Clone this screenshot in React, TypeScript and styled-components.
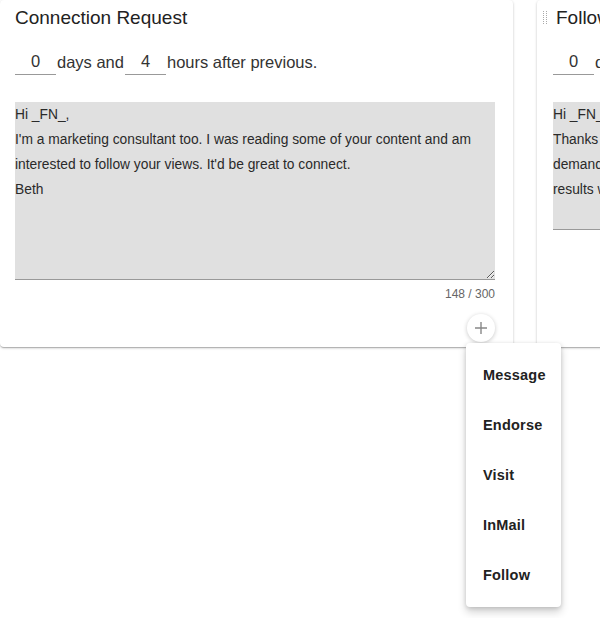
import React from 'react';
import styled, {createGlobalStyle} from 'styled-components';

const GlobalStyle = createGlobalStyle`
  body {
    margin: 0;
    padding: 0;
    background: #fff;
    font-family: 'Liberation Sans', Arial, sans-serif;
    color: #222;
  }
`;

const Page = styled.div`
  position: relative;
  width: 600px;
  height: 618px;
  overflow: hidden;
`;

const Board = styled.div`
  display: flex;
  align-items: flex-start;
  gap: 24px;
  width: max-content;
`;

const Card = styled.section<{$first?: boolean}>`
  position: relative;
  box-sizing: border-box;
  flex-shrink: 0;
  width: 513px;
  height: 347px;
  padding: 0 18px 0 ${({$first}) => ($first ? 15 : 16)}px;
  background: #fff;
  border-radius: 4px;
  box-shadow: 0 1px 3px rgba(0, 0, 0, 0.2), 0 1px 1px rgba(0, 0, 0, 0.12),
    0 2px 1px -1px rgba(0, 0, 0, 0.1);
  z-index: ${({$first}) => ($first ? 2 : 1)};
`;

const Header = styled.header`
  display: flex;
  align-items: center;
  gap: 9px;
  height: 36px;
`;

const Handle = styled.svg`
  margin-left: -10px;
  flex-shrink: 0;
`;

const Title = styled.h2`
  margin: 0;
  font-size: 19px;
  font-weight: 400;
  color: #222;
  white-space: nowrap;
`;

const DelayRow = styled.div`
  display: flex;
  align-items: center;
  height: 26px;
  margin-top: 13px;
  font-size: 16.5px;
  color: #333;
  white-space: nowrap;
`;

const DelayInput = styled.input`
  box-sizing: border-box;
  width: 41px;
  height: 26px;
  padding: 0;
  border: none;
  border-bottom: 1px solid #999;
  background: transparent;
  font-family: 'Liberation Sans', Arial, sans-serif;
  font-size: 16.5px;
  color: #333;
  text-align: center;
  outline: none;
`;

const DelayLabel = styled.span`
  margin: 0 1px 0 1px;
`;

const Message = styled.textarea<{$height: number}>`
  display: block;
  box-sizing: border-box;
  width: 480px;
  height: ${({$height}) => $height}px;
  margin-top: 27px;
  padding: 0;
  border: none;
  border-bottom: 1px solid #999;
  border-radius: 0;
  background: #e0e0e0;
  font-family: 'Liberation Sans', Arial, sans-serif;
  font-size: 13.8px;
  line-height: 25px;
  color: #2a2a2a;
  resize: vertical;
  outline: none;
  overflow: hidden;
`;

const Counter = styled.div`
  margin-top: 6px;
  width: 480px;
  font-size: 12px;
  line-height: 16px;
  color: #666;
  text-align: right;
`;

const AddWrap = styled.div`
  position: relative;
  display: flex;
  justify-content: flex-end;
  width: 480px;
  margin-top: 12px;
`;

const AddButton = styled.button`
  display: flex;
  align-items: center;
  justify-content: center;
  width: 28px;
  height: 28px;
  padding: 0;
  border: none;
  border-radius: 50%;
  background: #fff;
  box-shadow: 0 1px 4px rgba(0, 0, 0, 0.22);
  cursor: pointer;
`;

const Menu = styled.ul`
  position: absolute;
  top: 29px;
  right: -66px;
  z-index: 3;
  box-sizing: border-box;
  width: 95px;
  margin: 0;
  padding: 7px 0;
  list-style: none;
  background: #fff;
  border-radius: 4px;
  box-shadow: 0 5px 8px rgba(0, 0, 0, 0.18), 0 1px 4px rgba(0, 0, 0, 0.14);
`;

const MenuItem = styled.li`
  display: flex;
  align-items: center;
  height: 50px;
  padding-left: 17px;
  font-size: 14.5px;
  font-weight: 700;
  letter-spacing: 0.2px;
  color: #222;
  cursor: pointer;
`;

const DragHandle = () => (
  <Handle width="4" height="15" viewBox="0 0 4 15">
    {[0, 1, 2, 3, 4, 5, 6].map((r) =>
      [0, 3].map((c) => (
        <rect key={`${r}-${c}`} x={c} y={r * 2} width="1" height="1" fill="#aaa" />
      ))
    )}
  </Handle>
);

const PlusIcon = () => (
  <svg width="14" height="14" viewBox="0 0 14 14">
    <path d="M7 1v12M1 7h12" stroke="#888" strokeWidth="1.4" />
  </svg>
);

const actions = ['Message', 'Endorse', 'Visit', 'InMail', 'Follow'];

const connectText =
  "Hi _FN_,\nI'm a marketing consultant too. I was reading some of your content and am interested to follow your views. It'd be great to connect.\nBeth";

const followText =
  'Hi _FN_,\nThanks for connecting. We help agencies like yours generate\ndemand through outbound campaigns that get consistent\nresults without extra work.';

const App = () => {
  return (
    <Page>
      <GlobalStyle />
      <Board>
        <Card $first>
          <Header>
            <Title>Connection Request</Title>
          </Header>
          <DelayRow>
            <DelayInput readOnly value="0" />
            <DelayLabel>days and</DelayLabel>
            <DelayInput readOnly value="4" />
            <DelayLabel>hours after previous.</DelayLabel>
          </DelayRow>
          <Message $height={178} readOnly defaultValue={connectText} />
          <Counter>148 / 300</Counter>
          <AddWrap>
            <AddButton aria-label="Add step">
              <PlusIcon />
            </AddButton>
            <Menu>
              {actions.map((a) => (
                <MenuItem key={a}>{a}</MenuItem>
              ))}
            </Menu>
          </AddWrap>
        </Card>
        <Card>
          <Header>
            <DragHandle />
            <Title>Follow Up Message</Title>
          </Header>
          <DelayRow>
            <DelayInput readOnly value="0" />
            <DelayLabel>days and</DelayLabel>
            <DelayInput readOnly value="2" />
            <DelayLabel>hours after previous.</DelayLabel>
          </DelayRow>
          <Message $height={128} readOnly defaultValue={followText} />
        </Card>
      </Board>
    </Page>
  );
};

export default App;
